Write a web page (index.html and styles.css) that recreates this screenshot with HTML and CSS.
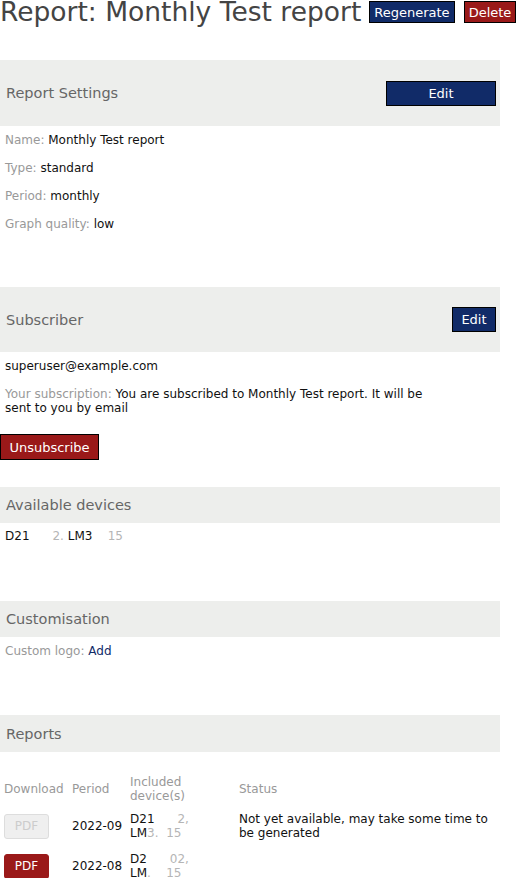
FILE: index.html
```html
<!DOCTYPE html>
<html lang="en">
<head>
    <meta charset="UTF-8">
    <meta name="viewport" content="width=device-width, initial-scale=1.0">
    <title>Report: Monthly Test report</title>
    <link rel="stylesheet" href="styles.css">
</head>
<body>
    <header class="page-title">
        <h1>Report: Monthly Test report</h1>
        <button class="btn btn-primary">Regenerate</button>
        <button class="btn btn-danger">Delete</button>
    </header>

    <section class="panel">
        <div class="panel-head tall">
            <h2>Report Settings</h2>
            <button class="btn btn-primary btn-wide">Edit</button>
        </div>
        <div class="fields">
            <div><span class="label">Name:</span> Monthly Test report</div>
            <div><span class="label">Type:</span> standard</div>
            <div><span class="label">Period:</span> monthly</div>
            <div><span class="label">Graph quality:</span> low</div>
        </div>
    </section>

    <section class="panel subscriber">
        <div class="panel-head tall">
            <h2>Subscriber</h2>
            <button class="btn btn-primary btn-edit">Edit</button>
        </div>
        <div class="email">superuser@example.com</div>
        <p class="subscription"><span class="label">Your subscription:</span> You are subscribed to Monthly Test report. It will be sent to you by email</p>
        <button class="btn btn-danger btn-unsub">Unsubscribe</button>
    </section>

    <section class="panel devices">
        <div class="panel-head">
            <h2>Available devices</h2>
        </div>
        <div class="device-list">D21<span class="hidden">000</span><span class="faint">2.</span> LM3<span class="hidden">00</span><span class="faint">15</span></div>
    </section>

    <section class="panel custom">
        <div class="panel-head">
            <h2>Customisation</h2>
        </div>
        <div class="logo-line"><span class="label">Custom logo:</span> <a href="#">Add</a></div>
    </section>

    <section class="panel reports">
        <div class="panel-head">
            <h2>Reports</h2>
        </div>
        <table class="report-table">
            <colgroup>
                <col class="c-download">
                <col class="c-period">
                <col class="c-devices">
                <col>
            </colgroup>
            <thead>
                <tr>
                    <th>Download</th>
                    <th>Period</th>
                    <th><div class="narrow">Included device(s)</div></th>
                    <th>Status</th>
                </tr>
            </thead>
            <tbody>
                <tr>
                    <td><button class="pdf disabled">PDF</button></td>
                    <td>2022-09</td>
                    <td><div class="narrow">D21<span class="hidden">000</span><span class="faint">2,</span><br>LM<span class="faint">3.</span><span class="hidden">0</span><span class="faint">15</span></div></td>
                    <td>Not yet available, may take some time to be generated</td>
                </tr>
                <tr>
                    <td><button class="pdf">PDF</button></td>
                    <td>2022-08</td>
                    <td><div class="narrow">D2<span class="hidden">000</span><span class="faint">02,</span><br>LM<span class="faint">.</span><span class="hidden">00</span><span class="faint">15</span></div></td>
                    <td></td>
                </tr>
            </tbody>
        </table>
    </section>
</body>
</html>
```

FILE: styles.css
```css
html, body {
    margin: 0;
    padding: 0;
}

body {
    font-family: "DejaVu Sans", Verdana, sans-serif;
    font-size: 12px;
    color: #111;
    background: #fff;
}

.page-title {
    display: flex;
    align-items: center;
    height: 24px;
    margin-bottom: 36px;
}

.page-title h1 {
    margin: 0 8px 0 0;
    font-size: 26.5px;
    line-height: 24px;
    font-weight: normal;
    color: #444;
    white-space: nowrap;
}

.page-title .btn {
    height: 22px;
    padding: 0 4px;
    margin-right: 9px;
    font-size: 13px;
}

.btn {
    font-family: inherit;
    font-size: 12px;
    color: #fff;
    border: 1px solid #000;
    border-radius: 0;
    cursor: pointer;
}

.btn-primary {
    background-color: #112b68;
}

.btn-danger {
    background-color: #9a1919;
}

.panel-head {
    box-sizing: border-box;
    width: 500px;
    height: 36px;
    display: flex;
    align-items: center;
    justify-content: space-between;
    padding: 0 4px 0 6px;
    background-color: #edeeec;
}

.panel-head.tall {
    height: 66px;
}

.panel-head h2 {
    margin: 0;
    font-size: 14.5px;
    font-weight: normal;
    color: #666;
}

.btn-wide {
    width: 110px;
    height: 25px;
    font-size: 13px;
}

.btn-edit {
    width: 44px;
    height: 25px;
    font-size: 13px;
}

.label {
    color: #999;
}

.fields {
    padding-left: 5px;
    line-height: 28px;
}

.subscriber {
    margin-top: 49px;
}

.subscriber .panel-head.tall {
    height: 65px;
}

.email {
    padding-left: 5px;
    line-height: 28px;
}

.subscription {
    margin: 7px 0 0;
    padding-left: 5px;
    width: 430px;
    line-height: 14px;
}

.btn-unsub {
    display: block;
    margin-top: 19px;
    width: 99px;
    height: 26px;
    font-size: 13px;
    padding: 0;
}

.devices {
    margin-top: 27px;
}

.device-list {
    padding-left: 5px;
    line-height: 26px;
}

.hidden {
    color: #fff;
}

.faint {
    color: #b5b5b5;
}

.custom {
    margin-top: 52px;
}

.logo-line {
    padding-left: 5px;
    line-height: 28px;
}

.logo-line a {
    color: #112b68;
    text-decoration: none;
}

.reports {
    margin-top: 50px;
}

.reports .panel-head {
    height: 37px;
}

.report-table {
    margin-top: 18px;
    width: 500px;
    table-layout: fixed;
    border-collapse: collapse;
}

.c-download { width: 68px; }
.c-period { width: 58px; }
.c-devices { width: 109px; }

.report-table th {
    font-weight: normal;
    color: #999;
    text-align: left;
    padding: 5px 0 3px 4px;
    line-height: 14px;
    vertical-align: middle;
}

.report-table td {
    padding: 6px 0 6px 4px;
    line-height: 14px;
    vertical-align: middle;
}

.narrow {
    width: 62px;
    white-space: nowrap;
}

th .narrow {
    white-space: normal;
}

.pdf {
    width: 45px;
    height: 25px;
    font-family: inherit;
    font-size: 12px;
    color: #fff;
    background-color: #9a1919;
    border: 1px solid #9a1919;
    border-radius: 3px;
    padding: 0;
}

.pdf.disabled {
    color: #ccc;
    background-color: #efefef;
    border-color: #ddd;
}
```
